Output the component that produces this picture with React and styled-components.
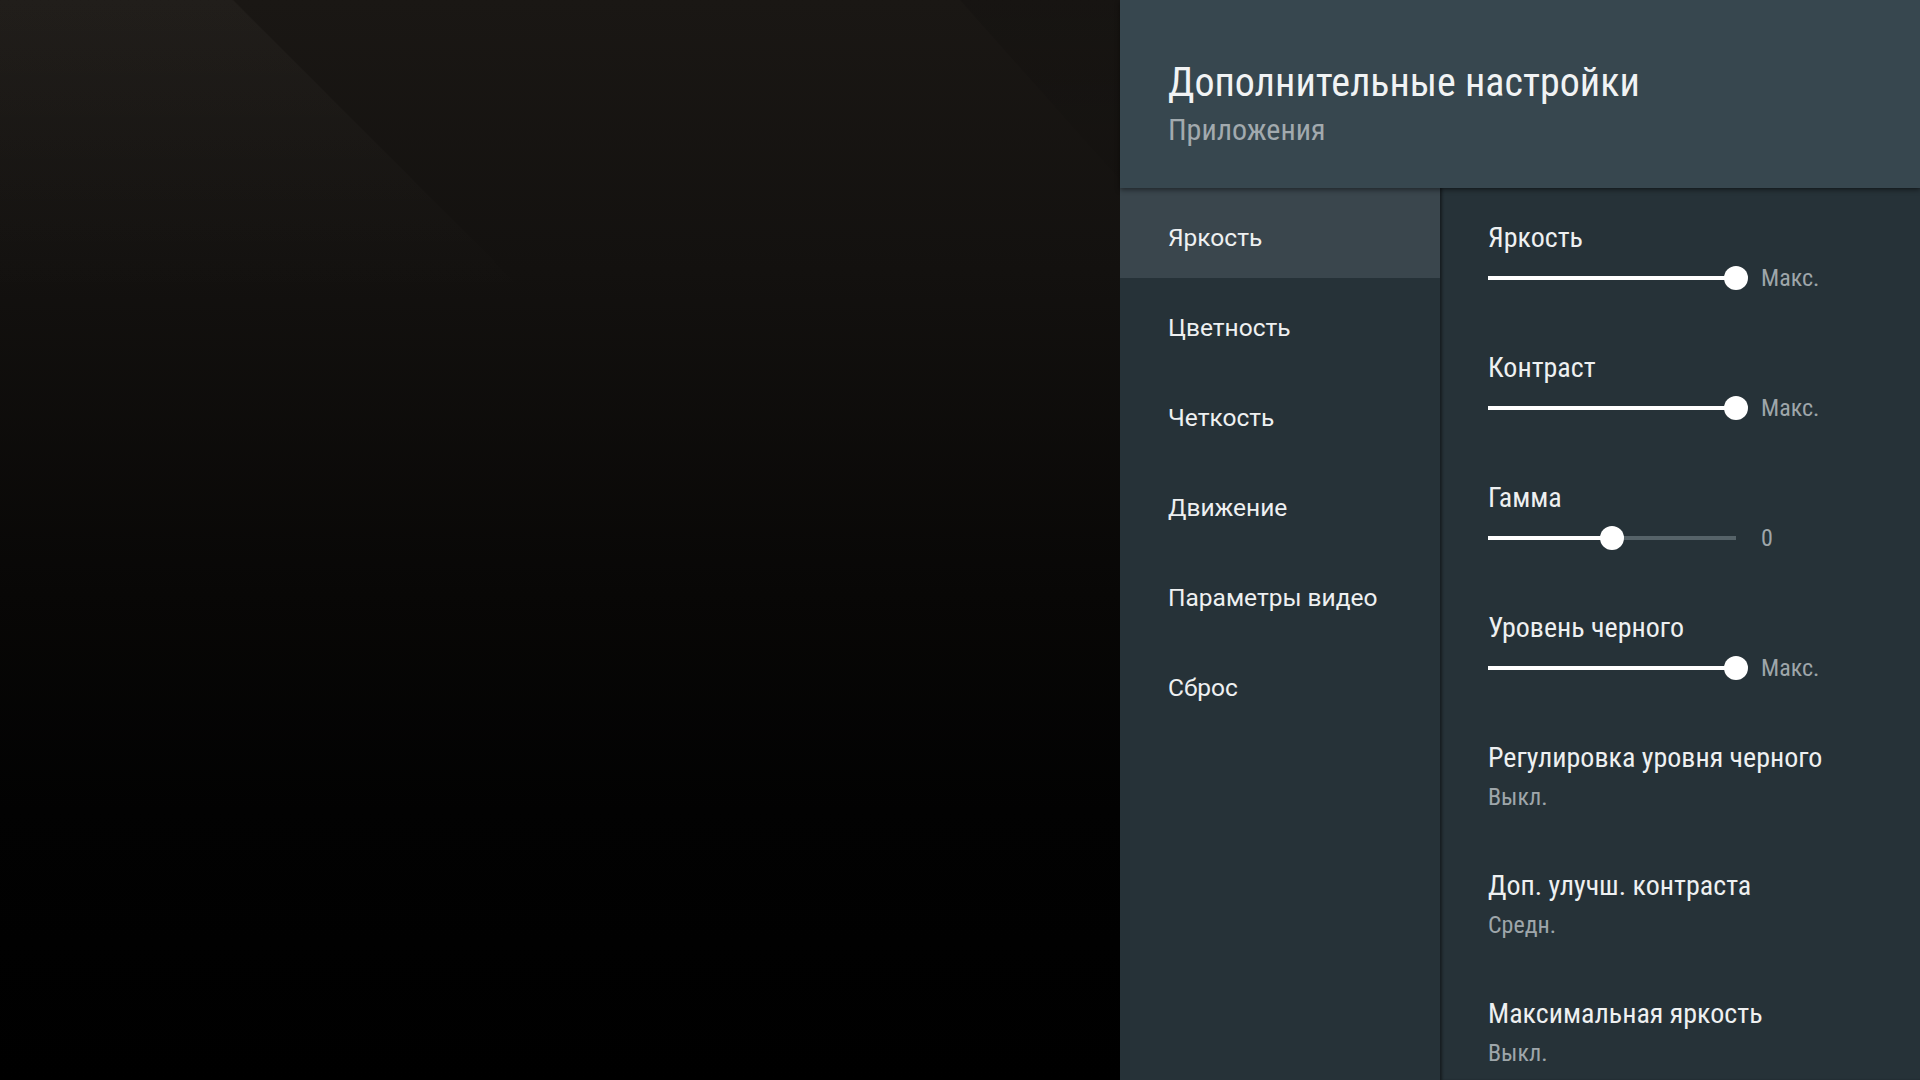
import styled, { createGlobalStyle } from 'styled-components';

const GlobalStyle = createGlobalStyle`
  html, body {
    margin: 0;
    padding: 0;
    background: #000;
  }
  * {
    box-sizing: border-box;
  }
`;

const condensed = `"Roboto Condensed", "Liberation Sans Narrow", "Roboto", sans-serif`;

const Screen = styled.div`
  display: flex;
  width: 1920px;
  height: 1080px;
  overflow: hidden;
`;

const Backdrop = styled.div`
  position: relative;
  flex: 1;
  background: linear-gradient(180deg, #1a1714 0%, #13110f 25%, #080706 55%, #020202 75%, #000 100%);

  &::before {
    content: '';
    position: absolute;
    inset: 0;
    background: linear-gradient(180deg, rgba(255, 245, 230, 0.03) 0%, rgba(255, 245, 230, 0) 28%);
    clip-path: polygon(0 0, 233px 0, 713px 480px, 0 480px);
  }

  &::after {
    content: '';
    position: absolute;
    inset: 0;
    background: linear-gradient(180deg, rgba(0, 0, 0, 0.12) 0%, rgba(0, 0, 0, 0) 25%);
    clip-path: polygon(960px 0, 1120px 0, 1120px 180px);
  }
`;

const Panel = styled.div`
  width: 800px;
  display: flex;
  flex-direction: column;
  background: #263238;
`;

const Header = styled.div`
  position: relative;
  z-index: 2;
  flex-shrink: 0;
  height: 188px;
  padding: 58px 48px 0;
  background: #37474f;
  box-shadow: 0 2px 5px rgba(0, 0, 0, 0.45);
`;

const Title = styled.h1`
  margin: 0;
  font-family: ${condensed};
  font-weight: 400;
  font-size: 40px;
  line-height: 50px;
  color: #f1f3f4;
`;

const Subtitle = styled.div`
  margin-top: 1px;
  font-family: ${condensed};
  font-size: 30px;
  line-height: 42px;
  color: #a2aaae;
`;

const Body = styled.div`
  flex: 1;
  display: flex;
  min-height: 0;
  overflow: hidden;
`;

const Menu = styled.div`
  width: 320px;
  display: flex;
  flex-direction: column;
`;

const MenuItem = styled.div`
  height: 90px;
  padding: 8px 0 0 48px;
  display: flex;
  align-items: center;
  font-family: "Roboto", sans-serif;
  font-size: 24.5px;
  color: #eef0f1;
  background: ${({ $active }) => ($active ? '#3a464d' : 'transparent')};
`;

const Details = styled.div`
  flex: 1;
  padding: 32px 48px 0;
  display: flex;
  flex-direction: column;
  box-shadow: inset 3px 0 3px -1px rgba(0, 0, 0, 0.45);
`;

const SliderItem = styled.div`
  display: flex;
  flex-direction: column;
  margin-bottom: 60px;
`;

const OptionItem = styled.div`
  display: flex;
  flex-direction: column;
  margin-bottom: 56px;
`;

const Label = styled.div`
  font-family: ${condensed};
  font-size: 28px;
  line-height: 36px;
  color: #eef0f1;
`;

const Value = styled.div`
  margin-top: ${({ $inline }) => ($inline ? '0' : '6px')};
  font-family: ${condensed};
  font-size: 24px;
  line-height: 30px;
  color: #9ea6aa;
`;

const SliderRow = styled.div`
  margin-top: 10px;
  display: flex;
  align-items: center;
  gap: 25px;
  height: 24px;
`;

const Track = styled.div`
  position: relative;
  width: 248px;
  height: 4px;
  background: #566369;
`;

const Fill = styled.div`
  height: 100%;
  background: #fff;
`;

const Thumb = styled.div`
  position: absolute;
  top: 50%;
  width: 24px;
  height: 24px;
  border-radius: 50%;
  background: #fff;
  transform: translate(-50%, -50%);
`;

const menu = ['Яркость', 'Цветность', 'Четкость', 'Движение', 'Параметры видео', 'Сброс'];

const sliders = [
  { label: 'Яркость', pct: 100, value: 'Макс.' },
  { label: 'Контраст', pct: 100, value: 'Макс.' },
  { label: 'Гамма', pct: 50, value: '0' },
  { label: 'Уровень черного', pct: 100, value: 'Макс.' },
];

const options = [
  { label: 'Регулировка уровня черного', value: 'Выкл.' },
  { label: 'Доп. улучш. контраста', value: 'Средн.' },
  { label: 'Максимальная яркость', value: 'Выкл.' },
];

export default function App() {
  return (
    <>
      <GlobalStyle />
      <Screen>
        <Backdrop />
        <Panel>
          <Header>
            <Title>Дополнительные настройки</Title>
            <Subtitle>Приложения</Subtitle>
          </Header>
          <Body>
            <Menu>
              {menu.map((item, i) => (
                <MenuItem key={item} $active={i === 0}>{item}</MenuItem>
              ))}
            </Menu>
            <Details>
              {sliders.map((s) => (
                <SliderItem key={s.label}>
                  <Label>{s.label}</Label>
                  <SliderRow>
                    <Track>
                      <Fill style={{ width: `${s.pct}%` }} />
                      <Thumb style={{ left: `${s.pct}%` }} />
                    </Track>
                    <Value $inline>{s.value}</Value>
                  </SliderRow>
                </SliderItem>
              ))}
              {options.map((o) => (
                <OptionItem key={o.label}>
                  <Label>{o.label}</Label>
                  <Value>{o.value}</Value>
                </OptionItem>
              ))}
            </Details>
          </Body>
        </Panel>
      </Screen>
    </>
  );
}
